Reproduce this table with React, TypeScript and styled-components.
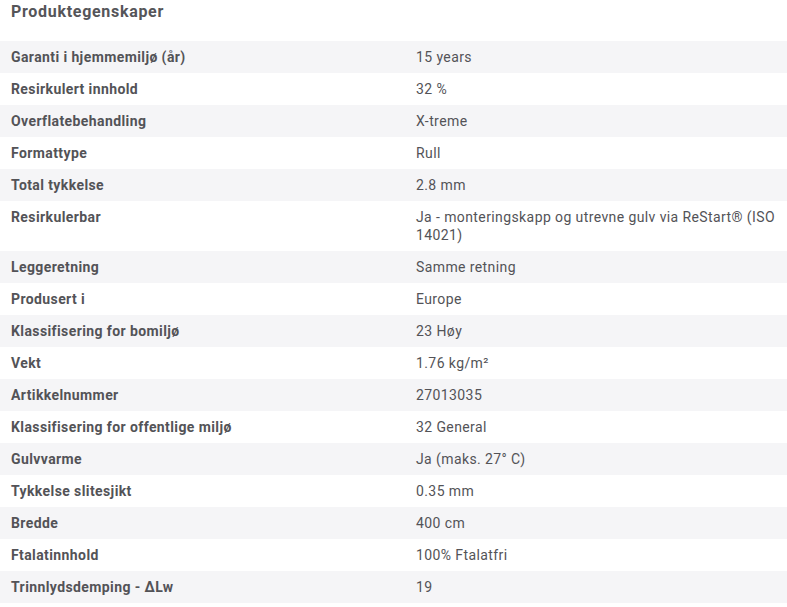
import React from "react";
import styled, { createGlobalStyle } from "styled-components";

const GlobalStyle = createGlobalStyle`
    body {
        margin: 0;
        background: #ffffff;
        font-family: Roboto, "Liberation Sans", Arial, sans-serif;
    }
`;

const Wrapper = styled.section`
    width: 787px;
`;

const Title = styled.h3`
    margin: 0;
    padding: 2px 11px 0;
    height: 39px;
    font-size: 16px;
    line-height: 20px;
    font-weight: 700;
    letter-spacing: 0.7px;
    color: #555559;
`;

const Table = styled.div`
    display: flex;
    flex-direction: column;
`;

const Row = styled.div<{ $striped: boolean }>`
    display: grid;
    grid-template-columns: 405px 1fr;
    background: ${(p) => (p.$striped ? "#f5f5f7" : "#ffffff")};
`;

const Label = styled.div`
    padding: 7px 11px;
    font-size: 14px;
    line-height: 18px;
    font-weight: 700;
    letter-spacing: 0.4px;
    color: #535357;
`;

const Value = styled.div`
    padding: 7px 11px;
    font-size: 14px;
    line-height: 18px;
    letter-spacing: 0.4px;
    color: #535357;
`;

const properties: [string, string][] = [
    ["Garanti i hjemmemiljø (år)", "15 years"],
    ["Resirkulert innhold", "32 %"],
    ["Overflatebehandling", "X-treme"],
    ["Formattype", "Rull"],
    ["Total tykkelse", "2.8 mm"],
    ["Resirkulerbar", "Ja - monteringskapp og utrevne gulv via ReStart® (ISO 14021)"],
    ["Leggeretning", "Samme retning"],
    ["Produsert i", "Europe"],
    ["Klassifisering for bomiljø", "23 Høy"],
    ["Vekt", "1.76 kg/m²"],
    ["Artikkelnummer", "27013035"],
    ["Klassifisering for offentlige miljø", "32 General"],
    ["Gulvvarme", "Ja (maks. 27° C)"],
    ["Tykkelse slitesjikt", "0.35 mm"],
    ["Bredde", "400 cm"],
    ["Ftalatinnhold", "100% Ftalatfri"],
    ["Trinnlydsdemping - ΔLw", "19"],
];

const App = () => {
    return (
        <Wrapper>
            <GlobalStyle />
            <Title>Produktegenskaper</Title>
            <Table>
                {properties.map(([label, value], i) => (
                    <Row key={label} $striped={i % 2 === 0}>
                        <Label>{label}</Label>
                        <Value>{value}</Value>
                    </Row>
                ))}
            </Table>
        </Wrapper>
    );
};

export default App;
